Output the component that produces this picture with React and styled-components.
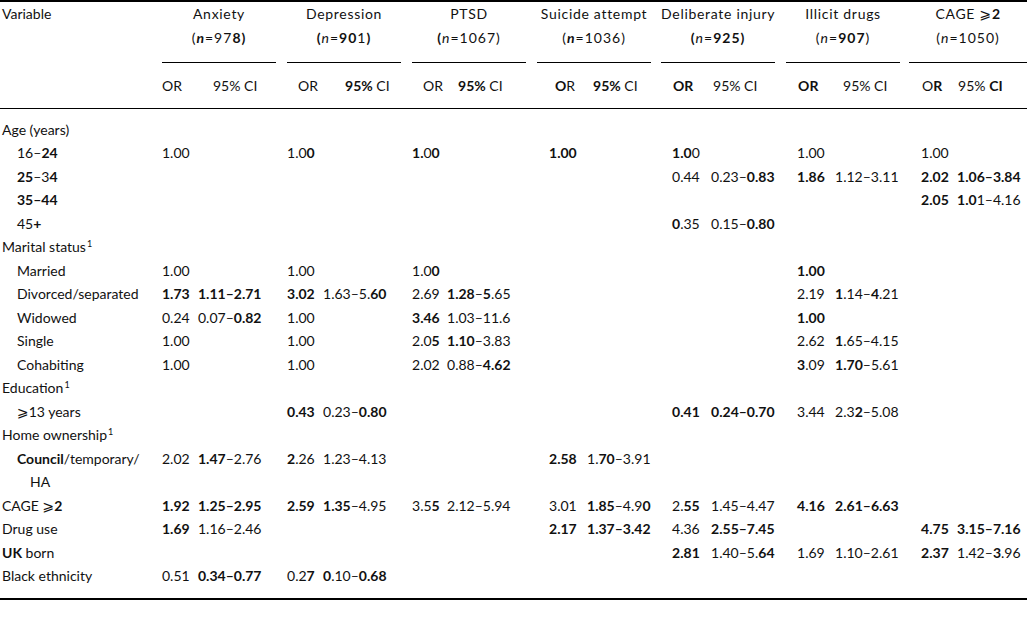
import React from 'react';
import styled, { createGlobalStyle } from 'styled-components';

const GlobalStyle = createGlobalStyle`
  html, body {
    margin: 0;
    padding: 0;
    background: #ffffff;
  }
  body {
    font-family: Lato, "Open Sans", "DejaVu Sans", sans-serif;
    color: #111;
  }
`;

const Table = styled.table`
  width: 1027px;
  border-collapse: collapse;
  table-layout: fixed;
  font: 400 14px/23.5px Lato, "DejaVu Sans", sans-serif;
  color: #111;
  border-top: 2px solid #000;
  border-bottom: 2px solid #000;
`;

const VarHead = styled.th`
  text-align: left;
  font-weight: 400;
  vertical-align: top;
  padding: 0 0 0 2px;
  border-bottom: 1px solid #000;
`;

const GroupHead = styled.th`
  font-weight: 400;
  padding: 0;
  vertical-align: top;
`;

const GroupRule = styled.div`
  margin-right: ${p => p.$gap}px;
  padding-bottom: 13px;
  border-bottom: 1px solid #000;
  text-align: center;
  white-space: nowrap;
`;

const GroupTitle = styled.div`
  letter-spacing: 0.7px;
`;

const GroupCount = styled.div`
  letter-spacing: 1px;
`;

const SubHead = styled.th`
  font-weight: 400;
  text-align: left;
  white-space: nowrap;
  padding: 11px 0 10px ${p => p.$pad}px;
  border-bottom: 1px solid #000;
`;

const Row = styled.tr`
  & > td { padding-top: ${p => (p.$first ? 9 : 0)}px; padding-bottom: ${p => (p.$last ? 10 : 0)}px; }
`;

const Label = styled.td`
  padding-left: ${p => (p.$indent ? 17 : 2)}px;
  white-space: nowrap;
  vertical-align: top;
`;

const Wrap = styled.div`
  padding-left: 13px;
`;

const Cell = styled.td`
  padding-left: ${p => p.$pad || 0}px;
  white-space: nowrap;
  vertical-align: top;
`;

const Seg = styled.span`
  font-weight: ${p => (p.$bold ? 700 : 400)};
  font-style: ${p => (p.$ital ? 'italic' : 'normal')};
`;

const Sup = styled.sup`
  font-size: 9px;
  line-height: 0;
  vertical-align: 5px;
  margin-left: 1px;
`;

// '*' toggles bold, '_' toggles italic, '^' toggles superscript
function Rich({ t }) {
  const parts = [];
  let bold = false;
  let ital = false;
  let sup = false;
  let buf = '';
  const flush = () => {
    if (buf) parts.push({ s: buf, bold, ital, sup });
    buf = '';
  };
  for (const ch of t) {
    if (ch === '*') { flush(); bold = !bold; }
    else if (ch === '_') { flush(); ital = !ital; }
    else if (ch === '^') { flush(); sup = !sup; }
    else buf += ch;
  }
  flush();
  return parts.map((p, i) =>
    p.sup ? <Sup key={i}>{p.s}</Sup> : <Seg key={i} $bold={p.bold} $ital={p.ital}>{p.s}</Seg>
  );
}

const groups = [
  { title: 'Anxiety', n: '(*_n_*=97*8)*', or: 'OR', ci: '95% CI', w: 125, orW: 36, orPad: 0, hOr: 0, hCi: 15 },
  { title: 'Depression', n: '*(*_n_=*90*1*)*', or: 'OR', ci: '*95%* CI', w: 125, orW: 36, orPad: 0, hOr: 11, hCi: 22 },
  { title: 'PTSD', n: '*(*_n_=1067)', or: 'OR', ci: '*95%* CI', w: 125, orW: 35, orPad: 0, hOr: 11, hCi: 11 },
  { title: 'Suicide attempt', n: '(*_n_*=1036)', or: '*O*R', ci: '*95%* CI', w: 124, orW: 50, orPad: 12, hOr: 18, hCi: 6 },
  { title: 'Deliberate injury', n: '*(*_n_=*925)*', or: '*OR*', ci: '95% CI', w: 125, orW: 50, orPad: 11, hOr: 12, hCi: 2 },
  { title: 'Illicit drugs', n: '(_n_=*907*)', or: '*OR*', ci: '95% CI', w: 123, orW: 49, orPad: 11, hOr: 12, hCi: 8 },
  { title: 'CAGE ⩾*2*', n: '(_n_=1050)', or: 'O*R*', ci: '95% *CI*', w: 118, orW: 48, orPad: 12, hOr: 13, hCi: 1 },
];

const E = null;

const rows = [
  { label: 'Age (years)' },
  { label: '16–*24*', indent: true, g: [['1.00', ''], ['1.0*0*', ''], ['*1.*0*0*', ''], ['*1.00*', ''], ['*1.0*0', ''], ['1.00', ''], ['1.00', '']] },
  { label: '*25*–3*4*', indent: true, g: [E, E, E, E, ['0.44', '0.23–*0.83*'], ['*1.86*', '1.12–3.11'], ['*2.02*', '*1.06–3.84*']] },
  { label: '*35–44*', indent: true, g: [E, E, E, E, E, E, ['*2.05*', '*1.0*1–4.16']] },
  { label: '45*+*', indent: true, g: [E, E, E, E, ['*0*.35', '0.15–*0.80*'], E, E] },
  { label: 'Marital status^1^' },
  { label: 'Married', indent: true, g: [['1.00', ''], ['1.00', ''], ['1.0*0*', ''], E, E, ['*1.00*', ''], E] },
  { label: 'Divorced/separated', indent: true, g: [['*1.73*', '*1.11–2.71*'], ['*3.02*', '1.63–5.*60*'], ['2.69', '*1.28*–*5*.65'], E, E, ['2.19', '*1*.14–*4*.21'], E] },
  { label: 'Widowed', indent: true, g: [['0.24', '0.07–*0.82*'], ['1.00', ''], ['*3.46*', '1.03–11.6'], E, E, ['*1.00*', ''], E] },
  { label: 'Single', indent: true, g: [['1.00', ''], ['1.00', ''], ['2.0*5*', '*1.10*–3.83'], E, E, ['2.62', '*1*.65–4.15'], E] },
  { label: 'Cohabiting', indent: true, g: [['1.00', ''], ['1.00', ''], ['2.02', '0.88–*4.62*'], E, E, ['*3*.09', '*1.70*–5.61'], E] },
  { label: 'Education^1^' },
  { label: '⩾13 years', indent: true, g: [E, ['*0.43*', '0.23–*0.80*'], E, E, ['*0.41*', '*0.24–0.70*'], ['3.44', '2.3*2*–5.08'], E] },
  { label: 'Home ownership^1^' },
  { label: '*Council*/temporary/', cont: 'HA', indent: true, g: [['2.02', '*1.47*–2.76'], ['*2*.26', '1.23–4.13'], E, ['*2.58*', '1.*70*–3.91'], E, E, E] },
  { label: 'CAGE ⩾*2*', g: [['*1.92*', '*1.25–2.95*'], ['*2.59*', '*1.35*–4.95'], ['3.5*5*', '2.12–5.94'], ['3.01', '*1.85*–4.9*0*'], ['2.*55*', '1.45–4.47'], ['*4.16*', '*2.61–6.63*'], E] },
  { label: 'Drug use', g: [['*1.69*', '1.16–2.46'], E, E, ['*2.17*', '*1.37–3.42*'], ['4.36', '*2.55–7.45*'], E, ['*4.75*', '*3.15–7.16*']] },
  { label: '*UK* born', g: [E, E, E, E, ['*2.81*', '1.40–5.*64*'], ['1.69', '1.10–2.61'], ['*2.37*', '1.42–*3*.96']] },
  { label: 'Black ethnicity', g: [['0.51', '*0.34–0.77*'], ['0.2*7*', '*0*.10–*0.68*'], E, E, E, E, E] },
];

export default function App() {
  return (
    <>
      <GlobalStyle />
      <Table>
        <colgroup>
          <col style={{ width: 162 }} />
          {groups.map((g, i) => (
            <React.Fragment key={i}>
              <col style={{ width: g.orW }} />
              <col style={{ width: g.w - g.orW }} />
            </React.Fragment>
          ))}
        </colgroup>
        <thead>
          <tr>
            <VarHead rowSpan={2}>Variable</VarHead>
            {groups.map((g, i) => (
              <GroupHead key={i} colSpan={2}>
                <GroupRule $gap={i === groups.length - 1 ? 0 : g.w - 114}>
                  <GroupTitle><Rich t={g.title} /></GroupTitle>
                  <GroupCount><Rich t={g.n} /></GroupCount>
                </GroupRule>
              </GroupHead>
            ))}
          </tr>
          <tr>
            {groups.map((g, i) => (
              <React.Fragment key={i}>
                <SubHead $pad={g.hOr}><Rich t={g.or} /></SubHead>
                <SubHead $pad={g.hCi}><Rich t={g.ci} /></SubHead>
              </React.Fragment>
            ))}
          </tr>
        </thead>
        <tbody>
          {rows.map((r, ri) => (
            <Row key={ri} $first={ri === 0} $last={ri === rows.length - 1}>
              <Label $indent={r.indent}>
                <Rich t={r.label} />
                {r.cont && <Wrap>{r.cont}</Wrap>}
              </Label>
              {groups.map((g, gi) => {
                const v = r.g ? r.g[gi] : null;
                return (
                  <React.Fragment key={gi}>
                    <Cell $pad={g.orPad}>{v && <Rich t={v[0]} />}</Cell>
                    <Cell>{v && <Rich t={v[1]} />}</Cell>
                  </React.Fragment>
                );
              })}
            </Row>
          ))}
        </tbody>
      </Table>
    </>
  );
}
